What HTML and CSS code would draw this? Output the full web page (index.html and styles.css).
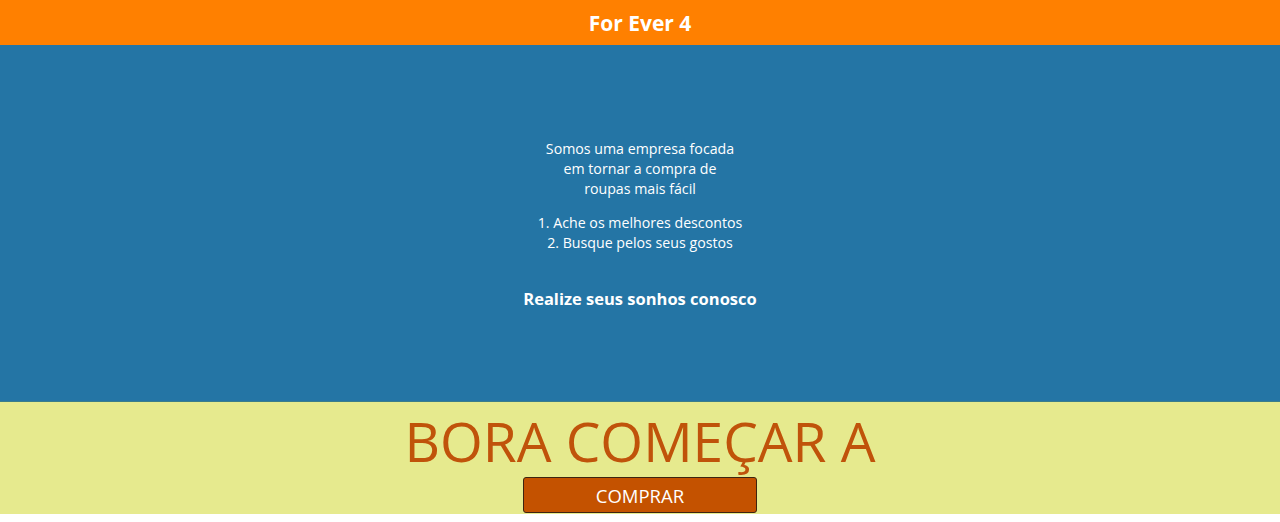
FILE: index.html
```html
<!DOCTYPE html>
<html lang="pt-BR">
<head>
<meta charset="utf-8">
<title>For Ever 4</title>
<link rel="stylesheet" href="styles.css">
</head>
<body>
<header class="topbar">
  <h1 class="brand">For Ever 4</h1>
</header>
<section class="hero">
  <div class="hero-content">
    <p class="intro">Somos uma empresa focada<br>em tornar a compra de<br>roupas mais fácil</p>
    <ol class="steps">
      <li>1. Ache os melhores descontos</li>
      <li>2. Busque pelos seus gostos</li>
    </ol>
    <p class="tagline">Realize seus sonhos conosco</p>
  </div>
</section>
<section class="cta">
  <h2 class="cta-title">BORA COMEÇAR A</h2>
  <button class="cta-button" type="button">COMPRAR</button>
</section>
</body>
</html>
```
FILE: styles.css
```css
* { box-sizing: border-box; }
html, body { margin: 0; padding: 0; background: #ffffff; }
body { font-family: "Open Sans", "Noto Sans", sans-serif; }

.topbar {
  height: 45px;
  background: #ff8000;
  display: flex;
  align-items: center;
  justify-content: center;
}
.brand {
  margin: 0;
  color: #ffffff;
  font-size: 21px;
  font-weight: 700;
  letter-spacing: 0;
}

.hero {
  height: 357px;
  background: #2475a5;
  border-bottom: 1px solid #3b7d8a;
  display: flex;
  align-items: center;
  justify-content: center;
  color: #ffffff;
  text-align: center;
}
.hero-content { display: flex; flex-direction: column; align-items: center; padding-top: 2px; }
.intro {
  margin: 0;
  font-size: 14.2px;
  line-height: 20px;
}
.steps {
  list-style: none;
  margin: 14px 0 0;
  padding: 0;
  font-size: 14.2px;
  line-height: 20px;
}
.tagline {
  margin: 35px 0 0;
  font-size: 16.5px;
  font-weight: 700;
  line-height: 22px;
}

.cta {
  height: 112px;
  background: #e6ea8e;
  display: flex;
  flex-direction: column;
  align-items: center;
}
.cta-title {
  margin: 6px 0 0;
  color: #c0530a;
  font-size: 55px;
  font-weight: 400;
  line-height: 66px;
}
.cta-button {
  margin-top: 3px;
  width: 234px;
  height: 36px;
  background: #c45200;
  color: #ffffff;
  border: 1px solid #3d2410;
  border-radius: 3px;
  font-family: "Open Sans", "Noto Sans", sans-serif;
  font-size: 18.5px;
  padding: 0;
}
```
